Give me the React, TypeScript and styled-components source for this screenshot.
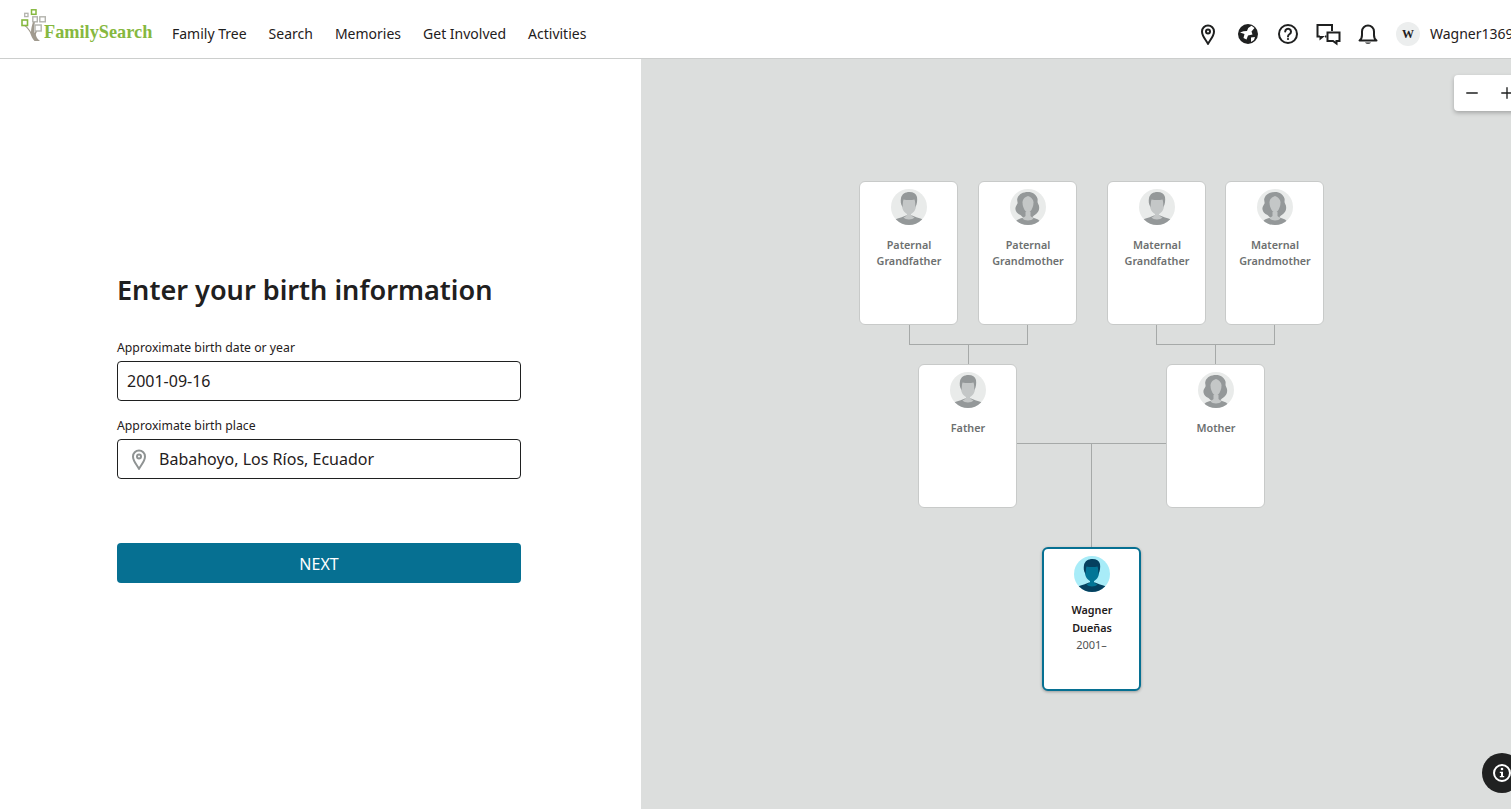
import React from 'react';
import styled, { createGlobalStyle } from 'styled-components';
import { Minus, Plus } from 'lucide-react';

const GlobalStyle = createGlobalStyle`
  html, body {
    margin: 0;
    padding: 0;
    height: 100%;
    overflow: hidden;
    background: #fff;
    font-family: 'Noto Sans', sans-serif;
    color: #1f2020;
  }
  * { box-sizing: border-box; }
`;

const NAV_ITEMS = ['Family Tree', 'Search', 'Memories', 'Get Involved', 'Activities'];

// card and connector places are relative to the tree canvas
const CARDS = [
  { x: 218, y: 122, kind: 'man', lines: ['Paternal', 'Grandfather'] },
  { x: 337, y: 122, kind: 'woman', lines: ['Paternal', 'Grandmother'] },
  { x: 466, y: 122, kind: 'man', lines: ['Maternal', 'Grandfather'] },
  { x: 584, y: 122, kind: 'woman', lines: ['Maternal', 'Grandmother'] },
  { x: 277, y: 305, kind: 'man', lines: ['Father'] },
  { x: 525, y: 305, kind: 'woman', lines: ['Mother'] },
];

const LINES = [
  { x: 268, y: 266, w: 1, h: 20 },
  { x: 386, y: 266, w: 1, h: 20 },
  { x: 268, y: 285, w: 119, h: 1 },
  { x: 327, y: 285, w: 1, h: 20 },
  { x: 515, y: 266, w: 1, h: 20 },
  { x: 633, y: 266, w: 1, h: 20 },
  { x: 515, y: 285, w: 119, h: 1 },
  { x: 574, y: 285, w: 1, h: 20 },
  { x: 376, y: 384, w: 149, h: 1 },
  { x: 450, y: 384, w: 1, h: 104 },
];

const Logo = () => (
  <LogoBox>
    <svg width="34" height="34" viewBox="0 0 34 34" fill="none">
      <path
        d="M5 17c3 2.500 5 5 6 7 0-3 1-7 2-10h2c-1 4-1.500 8-.5 11 .5-1 1-2 2-3l1 .5c-1 2-2 3.500-1.500 5 .5 2 2 4 4 5.500h-5.500c-2-2-3.500-5.500-4.500-8.500-1-2-3-4.500-5.500-6.500z"
        fill="#a09a8e"
      />
      <rect x="11.500" y="1.800" width="4.500" height="4.500" fill="#fff" stroke="#86b83f" strokeWidth="1.500" />
      <rect x="4.700" y="5.300" width="3.300" height="3.300" fill="#fff" stroke="#b3b3ad" strokeWidth="1.300" />
      <rect x="2" y="12" width="5.500" height="5.500" fill="#fff" stroke="#86b83f" strokeWidth="1.600" />
      <rect x="12.800" y="8.800" width="4.500" height="5" fill="#fff" stroke="#b3b3ad" strokeWidth="1.400" />
      <rect x="19.800" y="8.800" width="5.500" height="5" fill="#fff" stroke="#b3b3ad" strokeWidth="1.400" />
      <rect x="15" y="17" width="6.200" height="6" fill="#fff" stroke="#b3b3ad" strokeWidth="1.400" />
    </svg>
    <LogoWord>FamilySearch</LogoWord>
  </LogoBox>
);

const PinIcon = ({ color = '#1f2020' }: { color?: string }) => (
  <svg width="24" height="24" viewBox="0 0 24 24" fill="none" stroke={color} strokeWidth="2">
    <path d="M12 22c-1.200-3-6-7.500-6-12.500a6 6 0 0 1 12 0c0 5-4.800 9.500-6 12.500z" strokeLinejoin="round" />
    <circle cx="12" cy="9.500" r="2" />
  </svg>
);

const GlobeIcon = () => (
  <svg width="24" height="24" viewBox="0 0 24 24">
    <circle cx="12" cy="12" r="10" fill="#1f2020" />
    <path
      d="M15.500 3.800l3 2.200-3 3.500 1 3-4.500 1-1.500 4-3-1.500 1-4-4.500-1.500 3.500-1.200 3.500-.3 1.200-3z"
      fill="#fff"
    />
    <path d="M15 15.500l4-.5-1 3-3 2z" fill="#fff" />
  </svg>
);

const HelpIcon = () => (
  <svg width="24" height="24" viewBox="0 0 24 24" fill="none" stroke="#1f2020" strokeWidth="2">
    <circle cx="12" cy="12" r="9" />
    <path d="M9.200 9.500a2.900 2.900 0 1 1 4.500 2.500c-1 .7-1.700 1.200-1.700 2.500" strokeLinecap="round" />
    <circle cx="12" cy="17" r="1.100" fill="#1f2020" stroke="none" />
  </svg>
);

const ChatIcon = () => (
  <svg width="26" height="24" viewBox="0 0 26 24" fill="none" stroke="#1f2020" strokeWidth="2">
    <path d="M17 9V3H2.500v11.500H5" strokeLinejoin="miter" />
    <path d="M4.500 14v4.500L10 14z" fill="#1f2020" stroke="none" />
    <path d="M10 14.500h1.500" />
    <path d="M12.500 10.500h12V19h-3v2.500L18 19h-5.500z" strokeLinejoin="miter" fill="#fff" />
  </svg>
);

const BellIcon = () => (
  <svg width="24" height="24" viewBox="0 0 24 24" fill="none" stroke="#1f2020" strokeWidth="2">
    <path d="M3.500 18.500h17c-1.500-1-2.500-2.500-2.500-5.500V9.500a6 6 0 0 0-12 0V13c0 3-1 4.500-2.500 5.500z" strokeLinejoin="round" />
    <path d="M9 20.500c1 1.700 5 1.700 6 0z" fill="#1f2020" stroke="none" />
  </svg>
);

const Avatar = ({ kind }: { kind: string }) => {
  const self = kind === 'self';
  const bg = self ? '#a8ecf8' : '#e9ebea';
  const skin = self ? '#037596' : '#c4c7c7';
  const dark = self ? '#05405f' : '#949899';
  return (
    <svg width="36" height="36" viewBox="0 0 36 36">
      <clipPath id={`clip-${kind}`}>
        <circle cx="18" cy="18" r="18" />
      </clipPath>
      <g clipPath={`url(#clip-${kind})`}>
        <rect width="36" height="36" fill={bg} />
        {kind === 'woman' ? (
          <>
            <path
              d="M18 3c5 0 8 2.500 9.500 6.500.500 2-.5 3 .5 5 1.500 2.500 1.500 5 .5 7.500-1 2-2.500 3-4.500 4.500l-1.500 1.500h-10l-2-2c-3-1-4.500-3-5-5.500-.5-2.500 1-4 2-6 .5-2-1-3 0-5.500C9 5 13 3 18 3z"
              fill={dark}
            />
            <path d="M4 36c1-4 4-6 8-7l3.500-1.500h5L24 29c4 1 7 3 8 7z" fill={dark} />
            <path d="M12.500 29.500c2 2.500 9 2.500 11 0l-3-2.500v-4h-5v4z" fill={skin} />
            <path d="M18 7c-3 1-5.500 3-5.500 6.500 0 5 3 10 5.500 10s5.500-5 5.500-10c0-3-2.500-5.500-5.500-6.500z" fill={skin} />
          </>
        ) : (
          <>
            <path d="M1 36c1-5 4-6.500 9-7.500l5-2h6l5 2c5 1 8 2.500 9 7.500z" fill={dark} />
            <path d="M12.500 28.500c2 2.500 9 2.500 11 0l-3.500-2v-4h-4v4z" fill={skin} />
            <path d="M11 11c0-4 3-6 7-6s7 2 7 6v6c0 4-3.500 8.500-7 8.500S11 21 11 17z" fill={skin} />
            <path d="M11.500 18c-2-3-2-6-1.500-9 1-4 4-6 8.500-6 4 0 6.500 1.500 7.500 5 .5 3.500 0 7-1.500 10-.5-3 0-5-1-7.500-3 .8-7.500.8-11 0-.8 2.500-.5 4.500-1 7.500z" fill={dark} />
          </>
        )}
      </g>
    </svg>
  );
};

const App = () => {
  return (
    <>
      <GlobalStyle />
      <Page>
        <Header>
          <Logo />
          <Nav>
            {NAV_ITEMS.map((item) => (
              <NavLink key={item}>{item}</NavLink>
            ))}
          </Nav>
          <Spacer />
          <UserArea>
            <IconSlot><PinIcon /></IconSlot>
            <IconSlot><GlobeIcon /></IconSlot>
            <IconSlot><HelpIcon /></IconSlot>
            <IconSlot><ChatIcon /></IconSlot>
            <IconSlot><BellIcon /></IconSlot>
            <UserBadge>W</UserBadge>
            <UserName>Wagner1369</UserName>
          </UserArea>
        </Header>
        <Main>
          <FormPane>
            <Title>Enter your birth information</Title>
            <Field>
              <FieldLabel>Approximate birth date or year</FieldLabel>
              <InputBox>2001-09-16</InputBox>
            </Field>
            <Field>
              <FieldLabel>Approximate birth place</FieldLabel>
              <InputBox>
                <PinSlot><PinIcon color="#8f9393" /></PinSlot>
                Babahoyo, Los Ríos, Ecuador
              </InputBox>
            </Field>
            <NextButton>NEXT</NextButton>
          </FormPane>
          <TreeCanvas>
            <ZoomControl>
              <ZoomButton><Minus size={18} strokeWidth={1.8} /></ZoomButton>
              <ZoomButton><Plus size={18} strokeWidth={1.8} /></ZoomButton>
            </ZoomControl>
            {LINES.map((line, i) => (
              <Connector key={i} $x={line.x} $y={line.y} $w={line.w} $h={line.h} />
            ))}
            {CARDS.map((card) => (
              <PersonCard key={card.lines.join('-')} $x={card.x} $y={card.y}>
                <Avatar kind={card.kind} />
                <CardName>
                  {card.lines.map((line) => (
                    <div key={line}>{line}</div>
                  ))}
                </CardName>
              </PersonCard>
            ))}
            <PersonCard $x={401} $y={488} $self>
              <Avatar kind="self" />
              <SelfName>
                <div>Wagner</div>
                <div>Dueñas</div>
              </SelfName>
              <SelfDates>2001–</SelfDates>
            </PersonCard>
            <InfoButton>
              <svg width="20" height="20" viewBox="0 0 20 20" fill="none">
                <circle cx="10" cy="10" r="8" stroke="#fff" strokeWidth="2" />
                <circle cx="10" cy="6" r="1.300" fill="#fff" />
                <path d="M7.800 8.700H11v4.300h1.200v1.300H7.800V13H9V10H7.800z" fill="#fff" />
              </svg>
            </InfoButton>
          </TreeCanvas>
        </Main>
      </Page>
    </>
  );
};

const Page = styled.div`
  width: 1511px;
  height: 809px;
  display: flex;
  flex-direction: column;
  overflow: hidden;
`;

const Header = styled.header`
  flex: 0 0 59px;
  display: flex;
  align-items: center;
  padding: 10px 0 0 20px;
  background: #fff;
  border-bottom: 1px solid #cccecd;
`;

const LogoBox = styled.div`
  position: relative;
  flex: 0 0 152px;
  height: 48px;

  svg {
    display: block;
    margin-top: -2px;
  }
`;

const LogoWord = styled.span`
  position: absolute;
  left: 24px;
  top: 11px;
  font-family: 'Liberation Serif', serif;
  font-size: 18.300px;
  line-height: 22px;
  font-weight: 700;
  color: #86b83f;
  white-space: nowrap;
`;

const Nav = styled.nav`
  display: flex;
  gap: 22px;
`;

const NavLink = styled.a`
  font-size: 14px;
  line-height: 20px;
  color: #1f2020;
`;

const Spacer = styled.div`
  flex: 1;
`;

const UserArea = styled.div`
  flex: 0 0 323px;
  display: flex;
  align-items: center;
  overflow: hidden;
`;

const IconSlot = styled.span`
  flex: 0 0 40px;
  height: 26px;
  display: flex;
  align-items: center;
  justify-content: center;
`;

const UserBadge = styled.span`
  flex: 0 0 24px;
  height: 24px;
  margin-left: 8px;
  border-radius: 50%;
  background: #eceeee;
  display: flex;
  align-items: center;
  justify-content: center;
  font-family: 'Liberation Serif', serif;
  font-size: 12px;
  font-weight: 700;
`;

const UserName = styled.span`
  margin: 0 0 2px 10px;
  font-size: 14px;
  white-space: nowrap;
`;

const Main = styled.main`
  flex: 1;
  display: flex;
  min-height: 0;
`;

const FormPane = styled.section`
  flex: 0 0 641px;
  padding: 211px 120px 0 117px;
  background: #fff;
`;

const Title = styled.h1`
  margin: 0 0 29px;
  font-size: 27.100px;
  line-height: 40px;
  font-weight: 600;
  color: #1f2020;
`;

const Field = styled.div`
  margin-bottom: 16px;
`;

const FieldLabel = styled.label`
  display: block;
  font-size: 12.250px;
  line-height: 18px;
  margin-bottom: 4px;
  color: #1f2020;
`;

const InputBox = styled.div`
  height: 40px;
  display: flex;
  align-items: center;
  padding: 0 9px;
  border: 1px solid #1f2020;
  border-radius: 4px;
  font-size: 16px;
  color: #1f2020;
`;

const PinSlot = styled.span`
  display: flex;
  margin: 0 8px 0 0;
`;

const NextButton = styled.button`
  display: block;
  width: 404px;
  height: 40px;
  margin-top: 64px;
  padding: 2px 0 0;
  border: none;
  border-radius: 4px;
  background: #067092;
  color: #fff;
  font-family: inherit;
  font-size: 16px;
`;

const TreeCanvas = styled.section`
  position: relative;
  flex: 1;
  background: #dcdedd;
  overflow: hidden;
`;

const ZoomControl = styled.div`
  position: absolute;
  left: 813px;
  top: 16px;
  width: 90px;
  height: 36px;
  display: flex;
  background: #fff;
  border-radius: 4px;
  box-shadow: 0 2px 4px rgba(0, 0, 0, 0.25);
`;

const ZoomButton = styled.span`
  flex: 0 0 35px;
  display: flex;
  align-items: center;
  justify-content: center;
  color: #1f2020;
`;

const Connector = styled.div<{ $x: number; $y: number; $w: number; $h: number }>`
  position: absolute;
  left: ${({ $x }) => $x}px;
  top: ${({ $y }) => $y}px;
  width: ${({ $w }) => $w}px;
  height: ${({ $h }) => $h}px;
  background: #a6a9a8;
`;

const PersonCard = styled.div<{ $x: number; $y: number; $self?: boolean }>`
  position: absolute;
  left: ${({ $x }) => $x}px;
  top: ${({ $y }) => $y}px;
  width: 99px;
  height: 144px;
  display: flex;
  flex-direction: column;
  align-items: center;
  padding-top: 7px;
  background: #fff;
  border-radius: 6px;
  border: ${({ $self }) => ($self ? '2px solid #067092' : '1px solid #c8cac9')};
  box-shadow: ${({ $self }) => ($self ? '0 1px 3px rgba(0, 0, 0, 0.3)' : 'none')};
`;

const CardName = styled.div`
  margin-top: 12px;
  padding-left: 1px;
  font-size: 10.800px;
  line-height: 16px;
  font-weight: 600;
  color: #6d7070;
  text-align: center;
`;

const SelfName = styled.div`
  margin-top: 9px;
  padding-left: 1px;
  font-size: 10.800px;
  line-height: 18px;
  font-weight: 600;
  color: #1f2020;
  text-align: center;
`;

const SelfDates = styled.div`
  font-size: 11px;
  line-height: 16px;
  color: #4f5252;
`;

const InfoButton = styled.div`
  position: absolute;
  left: 841px;
  top: 694px;
  width: 40px;
  height: 40px;
  display: flex;
  align-items: center;
  justify-content: center;
  border-radius: 50%;
  background: #202121;
`;

export default App;
